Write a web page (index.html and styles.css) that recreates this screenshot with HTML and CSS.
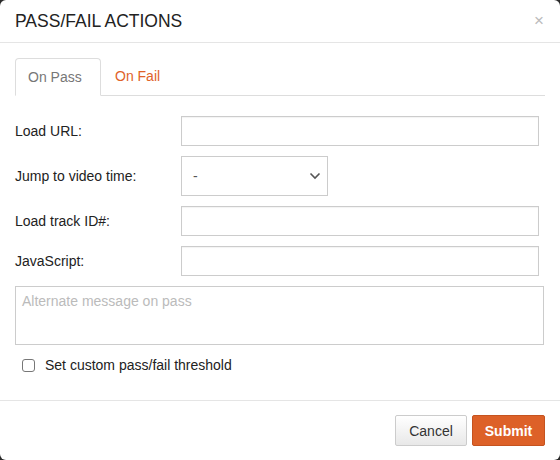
FILE: index.html
```html
<!DOCTYPE html>
<html>
<head>
<meta charset="utf-8">
<link rel="stylesheet" href="styles.css">
</head>
<body>
<div class="modal">
  <div class="modal-header">
    <h4 class="modal-title">PASS/FAIL ACTIONS</h4>
    <span class="close">×</span>
  </div>
  <div class="modal-body">
    <div class="tabs">
      <div class="tab active">On Pass</div>
      <div class="tab">On Fail</div>
    </div>
    <div class="form">
      <label class="lbl">Load URL:</label>
      <input class="inp" type="text">
      <label class="lbl">Jump to video time:</label>
      <div class="sel"><span>-</span><svg width="12" height="8" viewBox="0 0 12 8"><path d="M1.5 1.5 L6 6 L10.5 1.5" fill="none" stroke="#555" stroke-width="1.6"/></svg></div>
      <label class="lbl">Load track ID#:</label>
      <input class="inp" type="text">
      <label class="lbl">JavaScript:</label>
      <input class="inp" type="text">
    </div>
    <textarea class="msg" placeholder="Alternate message on pass"></textarea>
    <label class="check"><span class="box"></span>Set custom pass/fail threshold</label>
  </div>
  <div class="modal-footer">
    <button class="btn cancel">Cancel</button>
    <button class="btn submit">Submit</button>
  </div>
</div>
</body>
</html>
```
FILE: styles.css
```css
* { box-sizing: border-box; }
html, body { margin: 0; padding: 0; }
body {
  background: #2a2a2a;
  font-family: "Liberation Sans", Arial, sans-serif;
  color: #222;
  font-size: 14px;
}
.modal {
  width: 560px;
  height: 460px;
  background: #fff;
  border-radius: 6px;
  display: flex;
  flex-direction: column;
}
.modal-header {
  height: 43px;
  border-bottom: 1px solid #e5e5e5;
  padding: 0 15px;
  display: flex;
  align-items: center;
  justify-content: space-between;
}
.modal-title {
  margin: 0;
  font-weight: normal;
  font-size: 17.5px;
  color: #222;
}
.close {
  color: #bbb;
  font-size: 17px;
  margin-right: 1px;
}
.modal-body {
  padding: 15px 15px 0 15px;
  flex: 1;
}
.tabs {
  display: flex;
  border-bottom: 1px solid #ddd;
  height: 38px;
}
.tab {
  padding: 0 14px;
  height: 38px;
  line-height: 36px;
  color: #e0622a;
  font-size: 14px;
}
.tab.active {
  color: #777;
  border: 1px solid #ddd;
  border-bottom: 1px solid #fff;
  border-radius: 4px 4px 0 0;
  width: 86px;
  padding: 0 12px;
  background: #fff;
}
.form {
  display: grid;
  grid-template-columns: 166px 358px;
  row-gap: 10px;
  margin-top: 20px;
  align-items: center;
}
.lbl {
  font-size: 14px;
  color: #222;
}
.inp {
  height: 30px;
  border: 1px solid #ccc;
  box-shadow: inset 0 1px 1px rgba(0,0,0,0.05);
  margin: 0;
  font: inherit;
}
.sel {
  width: 147px;
  height: 40px;
  border: 1px solid #ccc;
  display: flex;
  align-items: center;
  justify-content: space-between;
  padding: 0 6px 0 11px;
  color: #555;
}
.msg {
  display: block;
  width: 529px;
  height: 59px;
  margin-top: 10px;
  border: 1px solid #ccc;
  resize: none;
  padding: 6px 6px;
  font-family: inherit;
  font-size: 14px;
}
.msg::placeholder { color: #bbb; }
.check {
  display: flex;
  align-items: center;
  margin-top: 12px;
  padding-left: 7px;
  font-size: 14px;
}
.box {
  width: 13px;
  height: 13px;
  border: 1px solid #777;
  border-radius: 3px;
  margin-right: 10px;
}
.modal-footer {
  height: 60px;
  border-top: 1px solid #e5e5e5;
  display: flex;
  justify-content: flex-end;
  gap: 5px;
  padding: 14px 15px 0 0;
}
.btn {
  height: 31px;
  font-family: inherit;
  font-size: 14px;
  padding: 0;
  border-radius: 2px;
}
.cancel {
  width: 72px;
  color: #333;
  border: 1px solid #ccc;
  background: linear-gradient(#fff, #e8e8e8);
}
.submit {
  width: 73px;
  color: #fff;
  border: 1px solid #c5531f;
  background: #dd6128;
  font-weight: bold;
}
```
